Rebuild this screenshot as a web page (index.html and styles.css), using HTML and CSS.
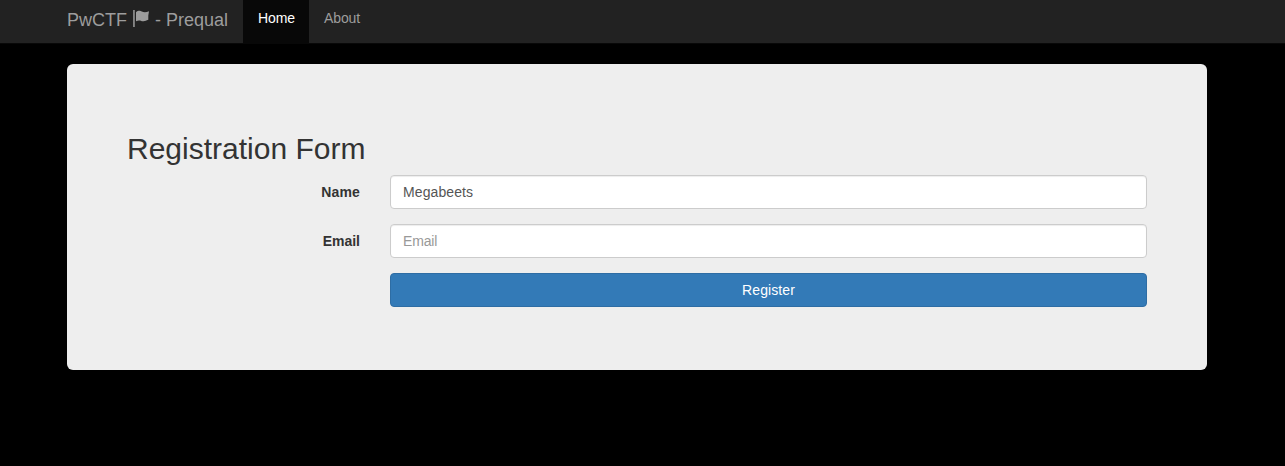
FILE: index.html
```html
<!DOCTYPE html>
<html lang="en">
<head>
<meta charset="utf-8">
<title>PwCTF - Prequal</title>
<link rel="stylesheet" href="styles.css">
</head>
<body>
<nav class="navbar">
  <div class="navbar-inner">
    <a class="brand">PwCTF <svg class="flag" viewBox="0 0 18 18" aria-hidden="true"><path d="M1.200 0h1.500v17H1.200zM4 2.300C5.500 .8 8 .4 9.800 1.400c2 1 4.200 1 7.200-.2L16.300 5.500v4.300c-2.300.4-3 1.700-5.300 1.500C8.500 11 7.500 9.500 4 11.200z"/></svg> - Prequal</a>
    <a class="nav-link active">Home</a>
    <a class="nav-link">About</a>
  </div>
</nav>
<main class="panel">
  <h2 class="title">Registration Form</h2>
  <form class="form">
    <label class="label name-label" for="name">Name</label>
    <input class="input name-input" id="name" type="text" value="Megabeets" placeholder="Name">
    <label class="label" for="email">Email</label>
    <input class="input email-input" id="email" type="text" placeholder="Email">
    <button class="submit" type="button">Register</button>
  </form>
</main>
</body>
</html>
```
FILE: styles.css
```css
* {
  box-sizing: border-box;
}

body {
  margin: 0;
  background: #000;
  color: #333;
  font: 14px/20px "Liberation Sans", Arial, sans-serif;
}

.navbar {
  height: 44px;
  background: #222;
  border-bottom: 1px solid #080808;
}

.navbar-inner {
  display: flex;
  width: 1140px;
  height: 43px;
  margin-left: 67px;
}

.brand {
  width: 176px;
  padding: 10px 0 0;
  color: #9d9d9d;
  font-size: 18px;
  white-space: nowrap;
}

.flag {
  display: inline-block;
  width: 18px;
  height: 18px;
  vertical-align: -2px;
  fill: currentColor;
}

.nav-link {
  padding: 8px 15px 0;
  color: #9d9d9d;
  letter-spacing: -0.1px;
}

.nav-link.active {
  width: 66px;
  background: #080808;
  color: #fff;
}

.panel {
  width: 1140px;
  height: 306px;
  margin: 20px 0 0 67px;
  padding: 68px 60px 63px;
  border-radius: 6px;
  background: #eee;
}

.title {
  margin: 0 0 10px;
  font-size: 30px;
  font-weight: 500;
  line-height: 33px;
}

.form {
  display: grid;
  grid-template-columns: 233px 757px;
  gap: 15px 30px;
}

.label {
  padding-top: 7px;
  font-weight: 700;
  text-align: right;
}

.name-label {
  letter-spacing: 0.15px;
}

.input {
  width: 100%;
  height: 34px;
  padding: 6px 12px;
  border: 1px solid #ccc;
  border-radius: 4px;
  background: #fff;
  box-shadow: inset 0 1px 1px rgba(0, 0, 0, 0.075);
  color: #555;
  font: inherit;
}

.name-input {
  letter-spacing: 0.1px;
}

.email-input {
  letter-spacing: -0.15px;
}

.input::placeholder {
  color: #999;
  opacity: 1;
}

.submit {
  grid-column: 2;
  height: 34px;
  padding: 6px 12px;
  border: 1px solid #2e6da4;
  border-radius: 4px;
  background: #337ab7;
  color: #fff;
  font: inherit;
  letter-spacing: 0.1px;
}
```
